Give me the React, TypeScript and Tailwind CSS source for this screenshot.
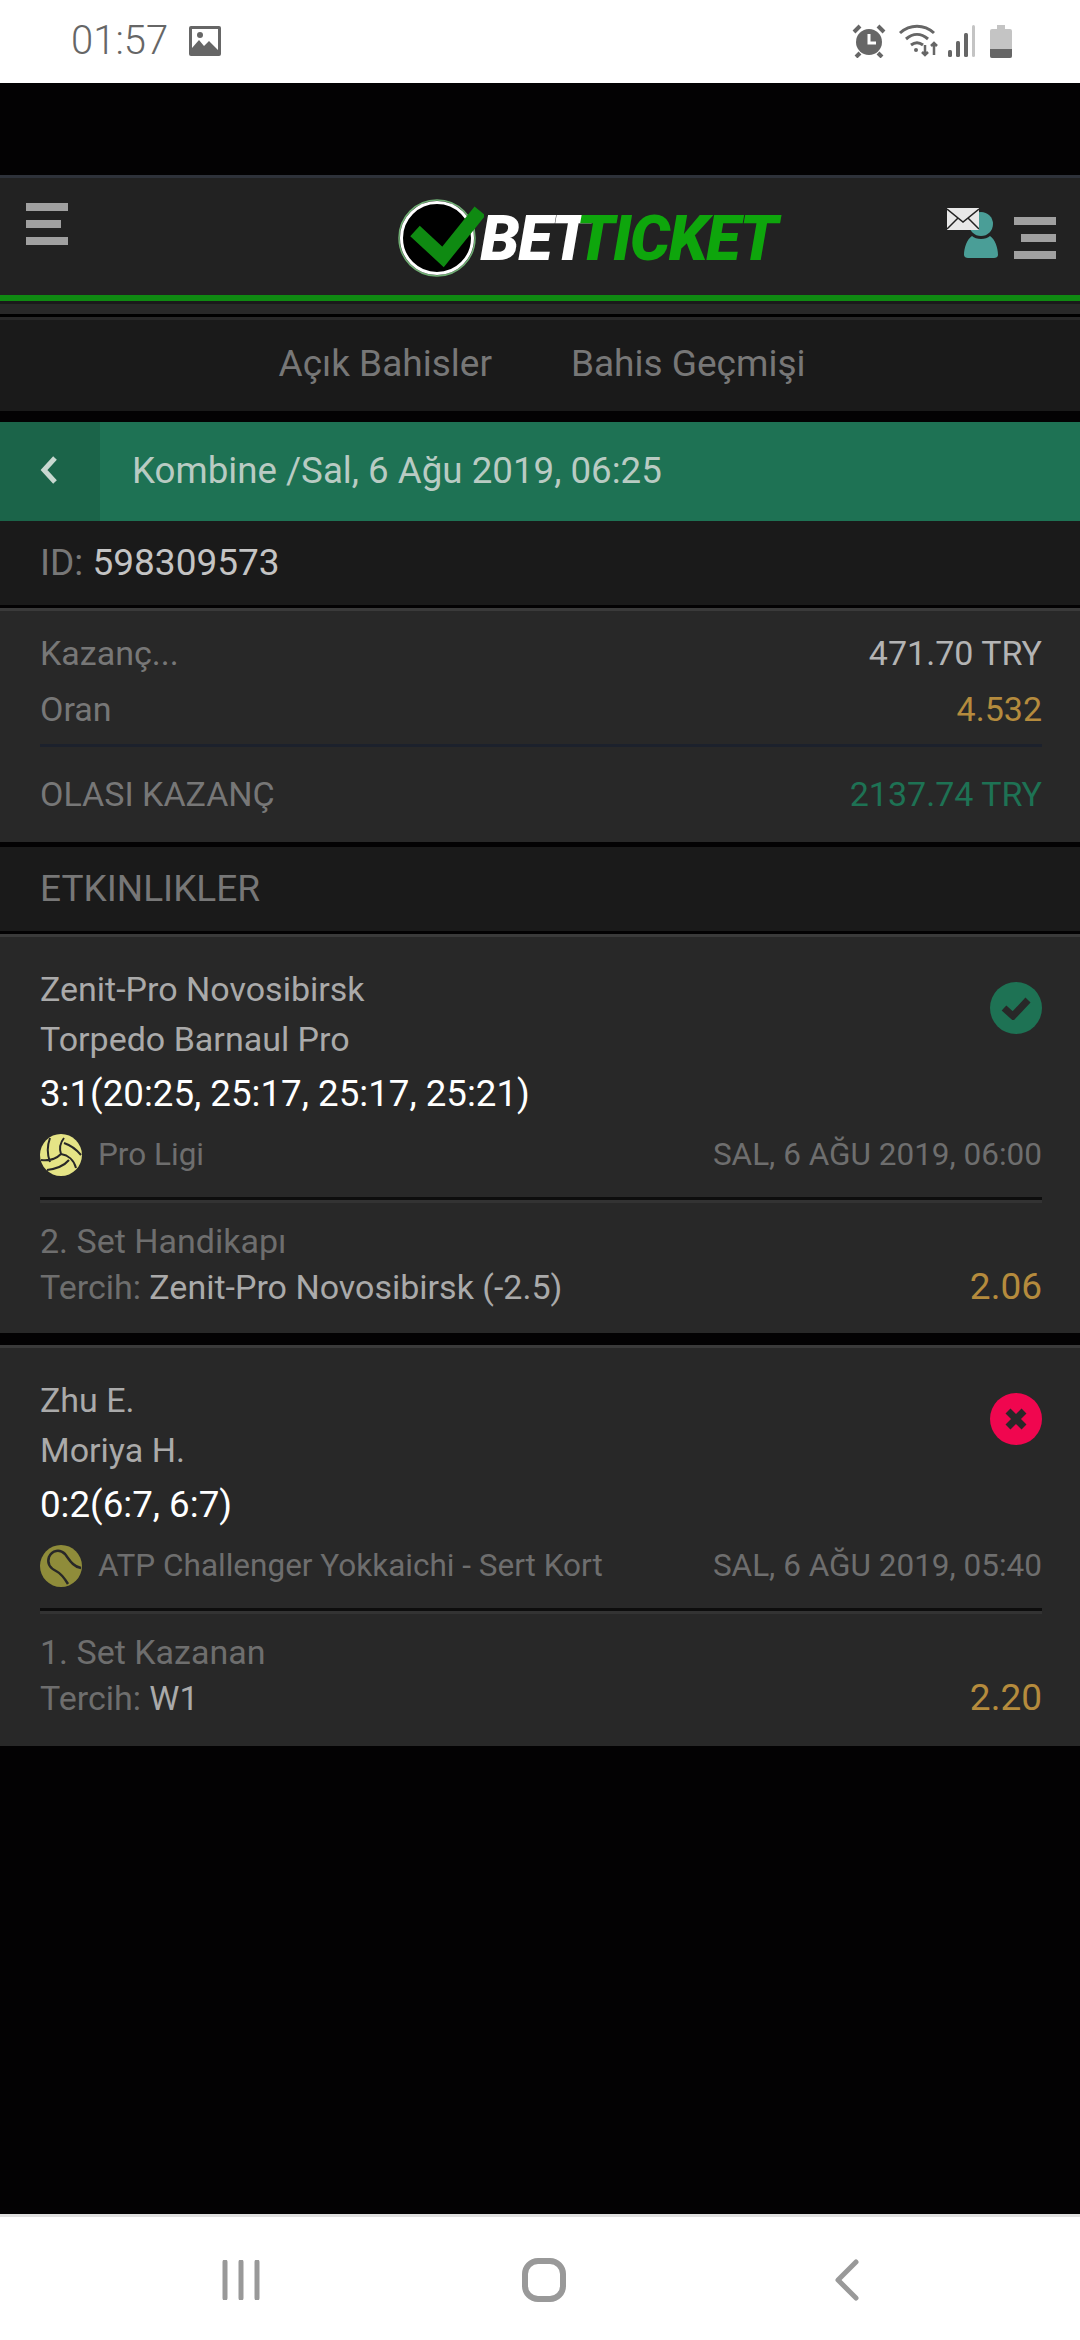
import { type ReactNode } from 'react'

const GOLD = 'text-[#b58b3d]'

function StatusBar() {
  return (
    <div className="h-[83px] bg-white flex items-center justify-between pl-[71px] pr-[68px] pb-[1px]">
      <div className="flex items-center gap-[21px]">
        <span className="text-[40px] leading-none font-light text-[#666]">01:57</span>
        <svg width="32" height="30" viewBox="0 0 32 30">
          <rect width="32" height="30" rx="2" fill="#666" />
          <rect x="3" y="3" width="26" height="24" fill="#fff" />
          <circle cx="11" cy="9" r="3" fill="#666" />
          <path d="M3 27v-5l7-8 5 6 5-5 9 9v3z" fill="#666" />
        </svg>
      </div>
      <div className="flex items-center">
        <svg width="34" height="34" viewBox="0 0 34 34" fill="none">
          <circle cx="17" cy="18" r="13" fill="#666" />
          <path d="M17 10v9h7" stroke="#fff" strokeWidth="3" />
          <path d="M2 8l6-6M32 8l-6-6M8 29l-4 4M26 29l4 4" stroke="#666" strokeWidth="4" />
        </svg>
        <svg className="ml-[12px]" width="40" height="34" viewBox="0 0 40 34" fill="none" stroke="#666" strokeWidth="3">
          <path d="M2 9c10-9 24-9 34 0" />
          <path d="M8 15c7-6 15-6 22 0" />
          <path d="M13 21c4-3 8-3 12 0" />
          <circle cx="18" cy="26" r="2" fill="#666" stroke="none" />
          <path d="M27 21v10m-3-3l3 3 3-3M36 31V19m-3 3l3-3 3 3" strokeWidth="2.5" />
        </svg>
        <svg className="ml-[10px]" width="28" height="32" viewBox="0 0 28 32">
          <rect x="0" y="25" width="4" height="7" rx="1.5" fill="#666" />
          <rect x="8" y="16" width="4" height="16" rx="1.5" fill="#666" />
          <rect x="16" y="8" width="4" height="24" rx="1.5" fill="#666" />
          <rect x="24" y="0" width="3" height="32" rx="1.5" fill="#c4c4c4" />
        </svg>
        <svg className="ml-[14px]" width="22" height="33" viewBox="0 0 22 33">
          <path d="M7 0h8v4h5a2 2 0 0 1 2 2v25a2 2 0 0 1-2 2H2a2 2 0 0 1-2-2V6a2 2 0 0 1 2-2h5z" fill="#c4c4c4" />
          <path d="M0 24h22v7a2 2 0 0 1-2 2H2a2 2 0 0 1-2-2z" fill="#666" />
        </svg>
      </div>
    </div>
  )
}

function Burger({ right }: { right?: boolean }) {
  return (
    <div className={`flex flex-col gap-[9px] w-[42px] ${right ? 'items-end' : 'items-start'}`}>
      <div className="h-[8px] w-[42px] bg-[#a0a0a0]" />
      <div className="h-[8px] w-[35px] bg-[#a0a0a0]" />
      <div className="h-[8px] w-[42px] bg-[#a0a0a0]" />
    </div>
  )
}

function Logo() {
  return (
    <div className="flex items-center">
      <svg width="86" height="80" viewBox="0 0 86 80" className="shrink-0">
        <circle cx="39" cy="40" r="38" fill="none" stroke="#6fae73" strokeWidth="1.5" />
        <circle cx="39" cy="40" r="35.5" fill="#000" stroke="#fff" strokeWidth="3" />
        <path d="M17 33l28 26 37-46" fill="none" stroke="#0f8a12" strokeWidth="14" />
      </svg>
      {/* the white T sits under the green one, negative tracking pulls TICKET over it */}
      <div className="italic font-black text-[63px] leading-none tracking-[-1.5px] ml-[-4px] font-['Roboto',sans-serif] whitespace-nowrap">
        <span className="text-white">BE</span>
        <span className="text-white tracking-[-13.5px]">T</span>
        <span className="text-[#0ea60c]">TICKET</span>
      </div>
    </div>
  )
}

function Header() {
  return (
    <div className="h-[120px] bg-[#222] border-t-[3px] border-[#2e323a] flex justify-between pl-[26px] pr-[24px] shrink-0">
      <div className="pt-[25px]">
        <Burger />
      </div>
      <div className="pt-[20px] ml-[160px]">
        <Logo />
      </div>
      <div className="flex pt-[30px] gap-[15px]">
        <div className="relative w-[52px] h-[50px]">
          <svg className="absolute left-[17px] top-[4px]" width="34" height="46" viewBox="0 0 34 46">
            <circle cx="17" cy="12" r="12" fill="#4a9e97" />
            <path d="M8 24c4 4 14 4 18 0 5 3 8 12 8 19 0 2-2 3-4 3H4c-2 0-4-1-4-3 0-7 3-16 8-19z" fill="#4a9e97" />
          </svg>
          <svg className="absolute left-0 top-0" width="32" height="22" viewBox="0 0 32 22">
            <rect width="32" height="22" fill="#e8e8e8" />
            <path d="M0 1l16 13L32 1M0 21l11-11M32 21L21 10" fill="none" stroke="#222" strokeWidth="1.5" />
          </svg>
        </div>
        <div className="mt-[9px]">
          <Burger right />
        </div>
      </div>
    </div>
  )
}

function Tabs() {
  return (
    <div className="shrink-0">
      <div className="h-[6px] bg-[#0f8a12]" />
      <div className="h-[3px] bg-[#1a1a1a]" />
      <div className="h-[10px] bg-[#282828]" />
      <div className="h-[3px] bg-black" />
      <div className="h-[94px] bg-[#1a1a1a] border-t-[3px] border-[#282828] flex justify-center items-center gap-[79px] text-[37px] text-[#777] pb-[3px] pl-[4px]">
        <span>Açık Bahisler</span>
        <span>Bahis Geçmişi</span>
      </div>
    </div>
  )
}

function TitleBar() {
  return (
    <div className="mt-[11px] h-[99px] bg-[#1e7254] flex items-stretch shrink-0">
      <div className="w-[100px] bg-[#1b6449] flex items-center justify-center">
        <svg width="20" height="30" viewBox="0 0 20 30" fill="none" className="mr-[2px] mb-[4px]">
          <path d="M16 3L5 15l11 12" stroke="#c8d8d0" strokeWidth="5" />
        </svg>
      </div>
      <div className="pl-[32px] flex items-center text-[36.7px] text-[#b9cbc3] pb-[1px]">Kombine /Sal, 6 Ağu 2019, 06:25</div>
    </div>
  )
}

function Row({ left, right, className }: { left: string; right: string; className: string }) {
  return (
    <div className="flex justify-between items-center">
      <span className="text-[#777]">{left}</span>
      <span className={className}>{right}</span>
    </div>
  )
}

function Summary() {
  return (
    <div className="shrink-0">
      <div className="h-[84px] bg-[#1a1a1a] flex items-center pl-[40px] text-[37px] text-[#777]">
        ID:&nbsp;<span className="text-[#c4c4c4]">598309573</span>
      </div>
      <div className="mt-[3px] h-[234px] bg-[#282828] border-t-[3px] border-[#3a3a3a] pl-[40px] pr-[38px] pt-[14px] text-[34px] leading-[56px]">
        <Row left="Kazanç..." right="471.70 TRY" className="text-[#b4b4b4]" />
        <Row left="Oran" right="4.532" className={GOLD} />
        <div className="h-[3px] bg-[#1c212c] mt-[7px] mb-[19px]" />
        <Row left="OLASI KAZANÇ" right="2137.74 TRY" className="text-[#1e7254]" />
      </div>
      <div className="mt-[5px] h-[84px] bg-[#1a1a1a] flex items-center pl-[40px] text-[37px] text-[#777]">ETKINLIKLER</div>
    </div>
  )
}

function VolleyBall() {
  return (
    <svg width="42" height="42" viewBox="0 0 42 42" fill="none" stroke="#282828" strokeWidth="2">
      <circle cx="21" cy="21" r="21" fill="#e5e486" stroke="none" />
      <path d="M10 4c-3 8-3 16 0 24M21 20c-2-6-1-11 3-16M21 20c-6 6-12 7-20 6M21 20c7 1 13 6 15 14M7 36c8-1 16-3 22-10M24 9c6 2 12 6 17 12" />
    </svg>
  )
}

function TennisBall() {
  return (
    <svg width="42" height="42" viewBox="0 0 42 42" fill="none" stroke="#282828" strokeWidth="2.5">
      <circle cx="21" cy="21" r="21" fill="#8f8c3a" stroke="none" />
      <path d="M41 23C33 22 29 14 25 9 20 4 12 5 9 12c-2 6 1 11 7 14 6 3 9 8 12 13" />
    </svg>
  )
}

function EventCard({
  home,
  away,
  score,
  icon,
  league,
  date,
  market,
  pick,
  odd,
  won,
  heightClass,
}: {
  home: string
  away: string
  score: string
  icon: ReactNode
  league: string
  date: string
  market: string
  pick: string
  odd: string
  won: boolean
  heightClass: string
}) {
  return (
    <div className={`${heightClass} bg-[#282828] border-t-[3px] border-[#3a3a3a] pl-[40px] pr-[38px] pt-[27px] shrink-0`}>
      <div className="flex justify-between items-start">
        <div className="text-[34px] leading-[50px] text-[#aaa]">
          <div>{home}</div>
          <div>{away}</div>
        </div>
        <div
          className={`mt-[18px] w-[52px] h-[52px] rounded-full flex items-center justify-center ${won ? 'bg-[#1e7254]' : 'bg-[#f0064f]'}`}
        >
          {won ? (
            <svg width="30" height="24" viewBox="0 0 30 24" fill="none">
              <path d="M3 12l9 8L27 4" stroke="#282828" strokeWidth="7" />
            </svg>
          ) : (
            <svg width="22" height="22" viewBox="0 0 22 22" fill="none">
              <path d="M3 3l16 16M19 3L3 19" stroke="#282828" strokeWidth="7" />
            </svg>
          )}
        </div>
      </div>
      <div className="text-[36.7px] leading-[50px] text-white mt-[5px]">{score}</div>
      <div className="flex items-center mt-[15px] h-[42px] text-[31.5px]">
        {icon}
        <span className="ml-[16px] text-[#6e6e6e]">{league}</span>
        <span className="ml-auto text-[#6e6e6e]">{date}</span>
      </div>
      <div className="mt-[21px] h-[3px] bg-[#0d0d0d]" />
      <div className="h-[3px] bg-[#333]" />
      <div className="text-[34px] leading-[46px] text-[#6e6e6e] mt-[15px]">{market}</div>
      <div className="flex justify-between items-center text-[34px] leading-[46px]">
        <div>
          <span className="text-[#6e6e6e]">Tercih: </span>
          <span className="text-[#aaa]">{pick}</span>
        </div>
        <span className={`text-[37px] ${GOLD}`}>{odd}</span>
      </div>
    </div>
  )
}

function NavBar() {
  return (
    <div className="h-[126px] bg-white border-t-[3px] border-[#e0e0e0] flex items-center shrink-0">
      <div className="w-full flex items-center pl-[222px] pt-[2px]">
        <svg width="38" height="40" viewBox="0 0 38 40" fill="none" stroke="#999" strokeWidth="5" strokeLinecap="round">
          <path d="M3 2v36M19 2v36M35 2v36" />
        </svg>
        <svg className="ml-[262px]" width="44" height="44" viewBox="0 0 44 44" fill="none">
          <rect x="3" y="3" width="38" height="38" rx="13" stroke="#999" strokeWidth="6" />
        </svg>
        <svg className="ml-[269px]" width="24" height="42" viewBox="0 0 24 42" fill="none">
          <path d="M21 3L3 21l18 18" stroke="#999" strokeWidth="5" strokeLinecap="round" strokeLinejoin="round" />
        </svg>
      </div>
    </div>
  )
}

export default function App() {
  return (
    <div className="w-[1080px] h-[2340px] bg-[#030203] flex flex-col font-['Roboto',sans-serif] overflow-hidden">
      <StatusBar />
      <div className="h-[92px] shrink-0" />
      <Header />
      <Tabs />
      <TitleBar />
      <Summary />
      <div className="mt-[3px]">
        <EventCard
          heightClass="h-[399px]"
          home="Zenit-Pro Novosibirsk"
          away="Torpedo Barnaul Pro"
          score="3:1(20:25, 25:17, 25:17, 25:21)"
          icon={<VolleyBall />}
          league="Pro Ligi"
          date="SAL, 6 AĞU 2019, 06:00"
          market="2. Set Handikapı"
          pick="Zenit-Pro Novosibirsk (-2.5)"
          odd="2.06"
          won
        />
      </div>
      <div className="mt-[12px]">
        <EventCard
          heightClass="h-[401px]"
          home="Zhu E."
          away="Moriya H."
          score="0:2(6:7, 6:7)"
          icon={<TennisBall />}
          league="ATP Challenger Yokkaichi - Sert Kort"
          date="SAL, 6 AĞU 2019, 05:40"
          market="1. Set Kazanan"
          pick="W1"
          odd="2.20"
          won={false}
        />
      </div>
      <div className="flex-1" />
      <NavBar />
    </div>
  )
}
